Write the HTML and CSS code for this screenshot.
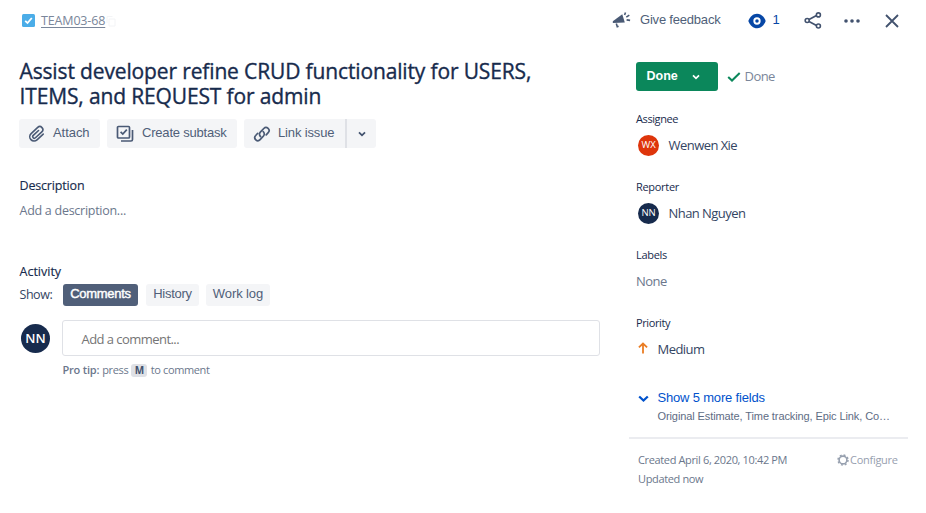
FILE: index.html
```html
<!DOCTYPE html>
<html lang="en">
<head>
<meta charset="utf-8">
<title>TEAM03-68</title>
<link rel="stylesheet" href="styles.css">
</head>
<body>
<div class="issue">
  <main class="main">
    <nav class="crumbs">
      <span class="type"><svg width="13" height="13" viewBox="0 0 13 13"><rect width="13" height="13" rx="1.5" fill="#4bade8"/><path d="M3.2 6.8l2.3 2.2 4.3-5" fill="none" stroke="#fff" stroke-width="1.8"/></svg></span>
      <a class="key" href="#">TEAM03-68</a>
      <svg class="copy" width="10" height="12" viewBox="0 0 10 12"><path d="M1 8V1.5h5.500M3 4h6v7H3z" fill="none" stroke="#f3f4f6"/></svg>
    </nav>
    <h1 class="title"><span class="t1">Assist developer refine CRUD functionality for USERS,</span><span class="t2">ITEMS, and REQUEST for admin</span></h1>
    <div class="actions">
      <button class="btn attach"><svg width="18" height="18" viewBox="0 0 18 18"><g transform="rotate(47 9 9)"><path d="M13.300 4.500v8.500a4.300 4.300 0 0 1-8.600 0V4a3 3 0 0 1 6 0v8.700a1.600 1.600 0 0 1-3.200 0V5.500" fill="none" stroke="#4a5a75" stroke-width="1.600" stroke-linecap="round"/></g></svg><span>Attach</span></button>
      <button class="btn subtask"><svg width="18" height="18" viewBox="0 0 18 18"><rect x="1.500" y="1.500" width="12" height="11.500" rx="1" fill="none" stroke="#4a5a75" stroke-width="1.700"/><path d="M4.600 6.800l2.200 2.300 4-4.500M16.500 5v9.500a1.500 1.500 0 0 1-1.500 1.500H5" fill="none" stroke="#4a5a75" stroke-width="1.700"/></svg><span>Create subtask</span></button>
      <div class="split">
        <button class="btn link"><svg width="18" height="18" viewBox="0 0 18 18"><path d="M7.500 11.500a3 3 0 0 1-.2-4.300l3.500-3.700a3 3 0 0 1 4.400 4.200l-2 2.200M10.200 6.700a3 3 0 0 1 .3 4.300l-3.400 3.700a3 3 0 0 1-4.400-4.200l2-2.200" fill="none" stroke="#4a5a75" stroke-width="1.700" stroke-linecap="round"/></svg><span>Link issue</span></button>
        <button class="btn more"><svg width="8" height="6" viewBox="0 0 8 6"><path d="M1 1.300l3 3 3-3" fill="none" stroke="#42526e" stroke-width="1.800"/></svg></button>
      </div>
    </div>
    <h2 class="heading">Description</h2>
    <p class="describe">Add a description...</p>
    <h2 class="heading activity">Activity</h2>
    <div class="tabs">
      <span class="show">Show:</span>
      <button class="tab on">Comments</button>
      <button class="tab history">History</button>
      <button class="tab worklog">Work log</button>
    </div>
    <div class="comment">
      <span class="avatar big">NN</span>
      <div class="field">Add a comment...</div>
    </div>
    <p class="tip"><b>Pro tip:</b><span class="press">press</span><kbd>M</kbd><span class="rest">to comment</span></p>
  </main>
  <aside class="side">
    <div class="tools">
      <svg class="horn" width="19" height="18" viewBox="0 0 19 18"><path d="M.8 10.200L10.300 3.200l2.500 8.300-12 .6z" fill="#4a5a75"/><path d="M4.300 12.500l1 3.200 1.300-.4M12.600 4l.9-2.600M14.300 6.200l3-2M14.600 8.900l3.500.5" fill="none" stroke="#4a5a75" stroke-width="1.600"/></svg>
      <span class="feedback">Give feedback</span>
      <svg class="eye" width="18" height="16" viewBox="0 0 18 16"><path d="M0.300 8C2 3.500 5.200.7 9 .7s7 2.800 8.700 7.300C16 12.500 12.800 15.300 9 15.300S2 12.500.300 8z" fill="#0747a6"/><circle cx="9" cy="8" r="2.700" fill="#0747a6" stroke="#fff" stroke-width="1.900"/></svg>
      <span class="watch">1</span>
      <svg class="share" width="18" height="17" viewBox="0 0 18 17"><path d="M5 7.500l7.500-4M5 9.500l7.500 4" stroke="#42526e" stroke-width="1.700"/><g fill="none" stroke="#42526e" stroke-width="1.600"><circle cx="3.200" cy="8.500" r="2"/><circle cx="14.400" cy="2.900" r="2"/><circle cx="14.400" cy="14" r="2"/></g></svg>
      <svg class="dots" width="16" height="4" viewBox="0 0 16 4"><g fill="#42526e"><circle cx="2" cy="2" r="1.800"/><circle cx="8" cy="2" r="1.800"/><circle cx="14" cy="2" r="1.800"/></g></svg>
      <svg class="close" width="14" height="14" viewBox="0 0 14 14"><path d="M1 1l12 12M13 1L1 13" stroke="#42526e" stroke-width="1.800"/></svg>
    </div>
    <div class="status">
      <button class="done"><span>Done</span><svg width="8" height="6" viewBox="0 0 8 6"><path d="M1 1.300l3 3 3-3" fill="none" stroke="#fff" stroke-width="1.700"/></svg></button>
      <svg class="check" width="14" height="10" viewBox="0 0 14 10"><path d="M1.200 4.900l3.800 3.600L12.700 1" fill="none" stroke="#0b875b" stroke-width="2"/></svg>
      <span class="resolution">Done</span>
    </div>
    <section class="prop"><h3 class="assignee">Assignee</h3><div class="value"><span class="avatar red">WX</span><span class="wx">Wenwen Xie</span></div></section>
    <section class="prop"><h3 class="reporter">Reporter</h3><div class="value"><span class="avatar">NN</span><span class="nn">Nhan Nguyen</span></div></section>
    <section class="prop"><h3 class="labels">Labels</h3><div class="value none">None</div></section>
    <section class="prop"><h3 class="priority">Priority</h3><div class="value"><svg class="up" width="10" height="12" viewBox="0 0 10 12"><path d="M5 11.500V1.800M.9 5.300L5 1.500l4.100 3.800" fill="none" stroke="#ea7d24" stroke-width="1.800"/></svg><span class="medium">Medium</span></div></section>
    <div class="expand"><svg width="11" height="8" viewBox="0 0 11 8"><path d="M1.200 1.500l4.300 4 4.300-4" fill="none" stroke="#0052cc" stroke-width="2.300"/></svg><a href="#">Show 5 more fields</a></div>
    <p class="fields">Original Estimate, Time tracking, Epic Link, Co…</p>
    <footer class="meta">
      <div class="dates"><span class="created">Created April 6, 2020, 10:42 PM</span><span class="updated">Updated now</span></div>
      <div class="configure"><svg width="12" height="12" viewBox="0 0 12 12"><circle cx="6" cy="6" r="3.900" fill="none" stroke="#97a0af" stroke-width="1.600"/><circle cx="6" cy="6" r="5" fill="none" stroke="#97a0af" stroke-width="1.500" stroke-dasharray="1.930 1.997"/></svg><span>Configure</span></div>
    </footer>
  </aside>
</div>
</body>
</html>
```
FILE: styles.css
```css
* { box-sizing: border-box; }
body { margin: 0; background: #fff; color: #172b4d; font: 13px/20px "Open Sans", "Noto Sans", sans-serif; }
h1, h2, h3, p { margin: 0; }
svg { display: block; flex: none; }
button { border: 0; padding: 0; color: #505f79; font: 13px/20px "Liberation Sans", sans-serif; }
span { white-space: nowrap; }
.issue { display: flex; width: 926px; height: 513px; overflow: hidden; }
.main { width: 610px; padding-left: 19.5px; }
.crumbs { display: flex; align-items: center; height: 41px; }
.type { margin-left: 2px; }
.key { margin-left: 6.5px; padding-top: 1px; color: #7a869a; font-size: 12.5px; letter-spacing: -.15px; text-decoration: underline; text-underline-offset: 2px; }
.copy { margin-left: 1px; }
.title { display: flex; flex-direction: column; margin-top: 18px; height: 50px; font-size: 21px; font-weight: 400; line-height: 25px; letter-spacing: -.14px; -webkit-text-stroke: .35px #172b4d; }
.t2 { letter-spacing: -.14px; }
.actions { display: flex; gap: 7px; margin: 10px 0 0 -.5px; height: 29px; }
.btn { display: flex; align-items: center; height: 29px; background: #f4f5f7; border-radius: 3px; }
.btn span { position: relative; top: -1px; }
.attach { width: 81px; padding-left: 9px; gap: 7px; }
.attach span { letter-spacing: -.05px; }
.subtask { width: 130px; padding-left: 9px; gap: 8px; letter-spacing: -.2px; }
.split { display: flex; }
.link { width: 101px; padding-left: 9px; gap: 7px; border-radius: 3px 0 0 3px; letter-spacing: -.15px; }
.more { width: 31px; justify-content: center; border-left: 2px solid #dfe1e6; border-radius: 0 3px 3px 0; }
.heading { margin-top: 28px; font-size: 12.5px; line-height: 20px; font-weight: 500; letter-spacing: -.17px; -webkit-text-stroke: .15px #172b4d; }
.describe { margin-top: 5px; color: #6b778c; font-size: 12.5px; letter-spacing: -.27px; }
.activity { margin-top: 41px; letter-spacing: 0; }
.tabs { display: flex; align-items: center; height: 22px; margin-top: 2px; }
.show { width: 43.5px; margin-top: -1px; color: #344563; font-size: 12.5px; letter-spacing: -.45px; }
.tab { height: 22px; border-radius: 3px; background: #f4f5f7; line-height: 20px; padding-bottom: 2px; letter-spacing: -.1px; }
.on { width: 75px; background: #505f79; color: #fff; letter-spacing: -.3px; -webkit-text-stroke: .4px #fff; }
.history { width: 53px; margin-left: 8px; letter-spacing: -.25px; }
.worklog { width: 64px; margin-left: 7px; }
.comment { display: flex; align-items: center; gap: 12px; margin-top: 14px; padding-left: 1.5px; height: 36px; }
.avatar { display: flex; align-items: center; justify-content: center; flex: none; width: 21px; height: 21px; border-radius: 50%; background: #172b4d; color: #fff; font-size: 9.5px; font-weight: 500; }
.red { background: #de350b; }
.big { width: 29px; height: 29px; font-size: 13px; font-weight: 600; }
.field { width: 538px; height: 36px; border: 1px solid #dfe1e6; border-radius: 3px; padding: 8px 0 0 18.500px; color: #757575; font-size: 13px; line-height: 20px; letter-spacing: -.55px; }
.tip { display: flex; align-items: center; height: 16px; margin: 6px 0 0 43px; color: #6b778c; font-size: 11px; letter-spacing: -.38px; }
.tip b { font-weight: 600; letter-spacing: -.2px; }
.press { margin-left: 3px; }
kbd { width: 16px; height: 13px; margin: 0 3.500px 0 3px; border-radius: 3px; background: #dfe1e6; color: #42526e; font: bold 10px/13px "Open Sans", sans-serif; text-align: center; }
.side { width: 316px; padding-left: 26px; }
.tools { display: flex; align-items: center; height: 40px; margin-left: -24px; color: #505f79; }
.tools span { font: 13px/20px "Liberation Sans", sans-serif; }
.tools .feedback { width: 108px; margin-left: 9px; letter-spacing: -.2px; }
.eye { margin-top: 2px; }
.tools .watch { width: 31.500px; margin-left: 6.500px; color: #0747a6; }
.dots { margin: 2px 24.500px 0 22px; }
.close { margin-top: 2px; }
.share { margin-top: 1px; }
.status { display: flex; align-items: center; margin-top: 22px; height: 29px; }
.done { display: flex; align-items: center; width: 82px; height: 29px; padding: 0 0 2px 10.500px; border-radius: 3px; background: #0b875b; color: #fff; font-weight: bold; font-size: 12.5px; }
.done svg { margin: 3px 0 0 14px; }
.check { margin: 1px 3.500px 0 9px; }
.resolution { margin-top: -2px; color: #7a869a; letter-spacing: -.55px; }
.prop { height: 68px; padding-top: 8px; }
.status + .prop { margin-top: 10px; }
.prop h3 { font-size: 11px; font-weight: 500; line-height: 20px; letter-spacing: -.3px; }
.assignee, .prop .assignee, .prop .priority { letter-spacing: -.4px; }
.value { display: flex; align-items: center; height: 32px; font-size: 13px; letter-spacing: -.55px; color: #344563; }
.value .avatar { margin: 0 9.500px 0 2px; padding-bottom: 1px; letter-spacing: -.2px; }
.none { color: #6b778c; letter-spacing: -.5px; }
.up { margin: -3px 9.500px 0 2px; }
.expand { display: flex; align-items: center; height: 20px; margin-top: 15px; padding-left: 2px; gap: 8.500px; }
.expand svg { margin-top: 1px; }
.expand a { color: #0052cc; font: 13px/20px "Liberation Sans", sans-serif; letter-spacing: -.18px; text-decoration: none; }
.fields { margin: -2px 0 0 21.500px; height: 20px; color: #5e6c84; font: 11px/20px "Liberation Sans", sans-serif; letter-spacing: -.1px; }
.meta { display: flex; margin: 11px 0 0 -7px; width: 279px; border-top: 2px solid #ebecf0; padding: 10px 0 0 9px; font-size: 11px; color: #6b778c; letter-spacing: -.36px; }
.dates { display: flex; flex-direction: column; width: 199px; line-height: 19px; padding-top: 1px; }
.configure { display: flex; align-items: center; height: 21px; gap: 1px; color: #97a0af; letter-spacing: -.27px; }
```
